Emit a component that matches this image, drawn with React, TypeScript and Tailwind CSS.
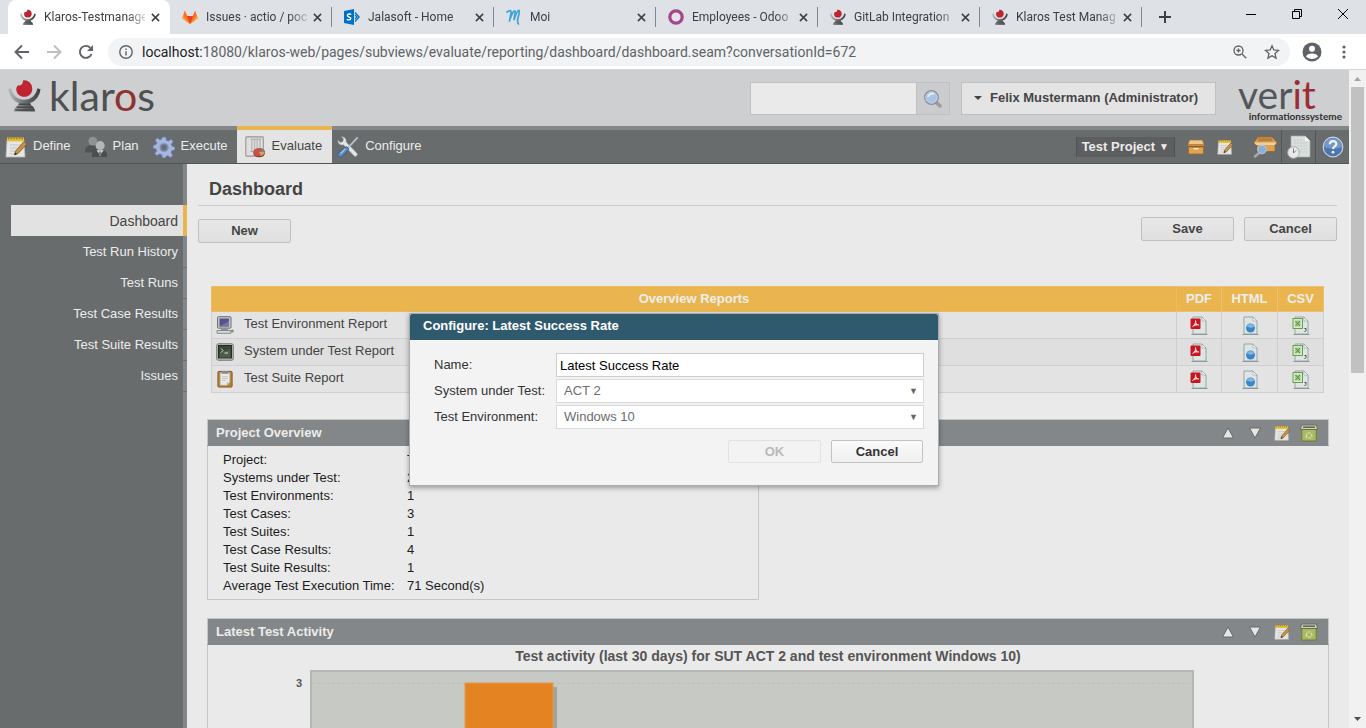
import React from 'react';

interface IconProps {
    className?: string;
}

const KlarosIcon: React.FC<IconProps> = ({ className }) => (
    <svg viewBox="0 0 34 34" className={className} aria-hidden="true">
        <defs>
            <linearGradient id="klarosArm" x1="0" x2="1">
                <stop offset="0" stopColor="#bdbdbd" />
                <stop offset="0.5" stopColor="#6d6f70" />
                <stop offset="1" stopColor="#3d3f40" />
            </linearGradient>
        </defs>
        <path d="M0 10.500l3.300-1C4.500 17 10 21.300 16.700 21.300S29 17 30.300 9.500l3.200 1C32.500 18 28 23 23 24.500c0 3.500 4.500 3.500 5 9H6c.5-5.500 5-5.500 5-9C6 23 1.500 18 0 10.500z" fill="url(#klarosArm)" />
        <path d="M11.500 26h11.500M9 29h17M7.500 32h19.500" stroke="#46494a" strokeWidth="1.500" />
        <path d="M10.500 6.500c2.500.5 5-1 5-5C20.500.5 25 4.500 25 10c0 5-3.500 8.300-8.200 8.300S8.500 15 8.500 10.500c0-1.500 1-3 2-4z" fill="#bf2531" />
    </svg>
);

const GitlabIcon: React.FC<IconProps> = ({ className }) => (
    <svg viewBox="0 0 16 16" className={className} aria-hidden="true">
        <path d="M8 15 0.300 9.200 2.800 1.500 5.300 7h5.400l2.500-5.500 2.500 7.700z" fill="#fc6d26" />
        <path d="M8 15 5 7h6z" fill="#e24329" />
        <path d="M8 15 0.300 9.200 1.200 6.800zM8 15l7.700-5.800-.9-2.400z" fill="#fca326" />
    </svg>
);

const SharepointIcon: React.FC<IconProps> = ({ className }) => (
    <svg viewBox="0 0 16 16" className={className} aria-hidden="true">
        <path d="M0 2 10 0v16L0 14z" fill="#0072c6" />
        <path d="M7.200 5.600C6.300 4.700 3.400 4.700 3.400 6.500c0 2 3.400 1.100 3.400 3 0 1.800-2.800 1.600-3.900.7" fill="none" stroke="#fff" strokeWidth="1.400" />
        <path d="M11 3.500 15.200 8 11 12.500M11 6l2 2-2 2" fill="none" stroke="#0072c6" strokeWidth="1.200" />
    </svg>
);

const MoiIcon: React.FC<IconProps> = ({ className }) => (
    <svg viewBox="0 0 16 16" className={className} aria-hidden="true">
        <path d="M1 3C4 1 5.500 1 5 4L3.500 12M4.500 9C6 4 8 1.500 9 2S8.500 6 8 11c1.500-5 3-9 4.500-9.500S13 5 12 9s-.5 5 .5 6" fill="none" stroke="#3ba3dd" strokeWidth="1.700" strokeLinecap="round" />
    </svg>
);

const OdooIcon: React.FC<IconProps> = ({ className }) => (
    <svg viewBox="0 0 16 16" className={className} aria-hidden="true">
        <circle cx="8" cy="8" r="6.200" fill="#e9e4ea" stroke="#a24689" strokeWidth="3.200" />
    </svg>
);

const CloseIcon: React.FC<IconProps> = ({ className }) => (
    <svg viewBox="0 0 10 10" className={className} aria-hidden="true">
        <path d="M1 1l8 8M9 1 1 9" stroke="#3c4043" strokeWidth="1.700" />
    </svg>
);

const NotepadIcon: React.FC<IconProps> = ({ className }) => (
    <svg viewBox="0 0 22 22" className={className} aria-hidden="true">
        <path d="M2 4h17l1 17H1z" fill="#e6e6e4" stroke="#b9b9b5" strokeWidth="0.800" />
        <path d="M5 9h11M5 12h9M5 15h8M4.500 18h7" stroke="#c3c5c5" />
        <path d="M2 1.500h17v4H2z" fill="#e5c03b" />
        <path d="M3 2.500h15" stroke="#9a7a1c" strokeDasharray="1.500 1.200" strokeWidth="1.500" />
        <path d="M19 5.500 22 8 13 17.500 9.500 19l1-3.800z" fill="#c8924b" stroke="#76511f" strokeWidth="0.800" />
        <path d="M9.500 19l.8-2.500 1.700 1.500z" fill="#222" />
    </svg>
);

const PeopleIcon: React.FC<IconProps> = ({ className }) => (
    <svg viewBox="0 0 24 24" className={className} aria-hidden="true">
        <path d="M0 18c-.3-5 2-7.500 5-8h5c4 .5 5 4 5 8z" fill="#505353" />
        <circle cx="8.500" cy="5.500" r="4.800" fill="#8f9292" />
        <path d="M7.500 23c-.5-4.500 1.500-7 5-7.500h8c3 .5 4 3 3.500 7.500z" fill="#4b4e4e" />
        <path d="M12.500 15.500h8l-4 5z" fill="#dcdcdc" />
        <circle cx="16.500" cy="10.500" r="5" fill="#b5b7b7" />
        <path d="M15.500 17h2l.5 4-1.500 1.500L15 21z" fill="#777a7a" />
    </svg>
);

const GearIcon: React.FC<IconProps> = ({ className }) => (
    <svg viewBox="0 0 24 24" className={className} aria-hidden="true">
        <path d="M10 1h4l.7 3.500 2 .9 3-2 2.400 2.700-2 2.900.8 2 3.100.9v3.500l-3.400.8-.8 2 1.900 3-2.600 2.400-2.900-2-1.900.8L13.500 24h-3.300l-.9-3.400-2-.9-3 1.900-2.400-2.500 2-3-.8-2L0 13.500v-3.400l3.200-.8.9-2L2.200 4.500 4.600 2l3 2 1.800-.7z" fill="#a8b6dc" stroke="#5a76b0" strokeWidth="0.900" />
        <circle cx="12" cy="12.500" r="5" fill="#8495b9" />
        <circle cx="12" cy="12.500" r="3.200" fill="#686c6d" stroke="#6f7f9f" strokeWidth="1.200" />
    </svg>
);

const ReportIcon: React.FC<IconProps> = ({ className }) => (
    <svg viewBox="0 0 22 24" className={className} aria-hidden="true">
        <rect x="1" y="1" width="19" height="21" rx="1" fill="#e3e3e3" stroke="#929292" strokeWidth="1.200" />
        <path d="M3.500 3v17" stroke="#bbb" strokeDasharray="1 2" />
        <path d="M6 3.500h12M6 17h5" stroke="#999" />
        <path d="M7.500 4v13M10.500 4v13M13.500 4v9M16.500 4v9" stroke="#b9bbbb" strokeWidth="1.700" />
        <ellipse cx="15.500" cy="18.500" rx="6.300" ry="4.800" fill="#8e2f25" />
        <ellipse cx="15.500" cy="17.500" rx="6.300" ry="4.500" fill="#c85248" />
        <path d="M15.500 17.500 20 14.500l1.500 3.500z" fill="#5f90a0" />
        <path d="M15.500 17.500h6c-.5 2-2 3.500-4 4z" fill="#d6a84c" />
    </svg>
);

const ToolsIcon: React.FC<IconProps> = ({ className }) => (
    <svg viewBox="0 0 24 24" className={className} aria-hidden="true">
        <path d="M1 4.500 3.500 7 6.500 6l.5-3L4.800.8C8 .5 10.500 3 10 6.500L22 19c1 1.500-1.200 4-3 3L7 9.500C4 10.500.5 8 1 4.500z" fill="#e4e5e5" stroke="#939696" strokeWidth="0.500" />
        <path d="M22.500 1.500 11 14" stroke="#b5c2cd" strokeWidth="2" />
        <path d="M10.500 11.500 13 14 5.500 22.500c-2.500 2-6-1-4.500-3.500z" fill="#5d8abf" stroke="#355d91" />
        <path d="M4 19l5-5" stroke="#a9c6e8" strokeWidth="1.500" />
    </svg>
);

const BoxIcon: React.FC<IconProps> = ({ className }) => (
    <svg viewBox="0 0 18 16" className={className} aria-hidden="true">
        <path d="M2.500 1h13L17 5.500H1z" fill="#ecc590" stroke="#a5702b" strokeWidth="0.700" />
        <path d="M1 5.500h16V8H1z" fill="#c98f42" />
        <path d="M1.500 8h15v7h-15z" fill="#dda253" stroke="#9c6824" strokeWidth="0.700" />
        <path d="M1 7.500h16" stroke="#8c5c20" />
        <path d="M6.500 9h5v1.500h-5z" fill="#fae7c8" />
    </svg>
);

const BoxSearchIcon: React.FC<IconProps> = ({ className }) => (
    <svg viewBox="0 0 24 22" className={className} aria-hidden="true">
        <path d="M5 1h14l5 5.500-2 2v7H4v-7l-3-2z" fill="#dca257" stroke="#966528" strokeWidth="0.800" />
        <path d="M5.500 2h13L20 5.500H4.500z" fill="#b9803a" />
        <path d="M1 6.500h22.500L22 9H3z" fill="#f0ce9c" />
        <path d="M2 20.500 6 17" stroke="#a9aaaa" strokeWidth="2.500" strokeLinecap="round" />
        <circle cx="9" cy="13.500" r="4.300" fill="#86b0e0" stroke="#c3c8cc" strokeWidth="1" />
    </svg>
);

const ScheduleIcon: React.FC<IconProps> = ({ className }) => (
    <svg viewBox="0 0 24 24" className={className} aria-hidden="true">
        <path d="M4 1h14l5 5v16H4z" fill="#d9dfdd" stroke="#a7adab" strokeWidth="0.700" />
        <path d="M18 1v5h5z" fill="#f5f5f5" />
        <path d="M7 5h9M7 8h13M7 11h13M11 14h9M13 17h7" stroke="#c2cbc8" strokeDasharray="2 1" />
        <circle cx="6.500" cy="17.500" r="5.800" fill="#e9e9e9" stroke="#a9abab" />
        <path d="M6.500 13.500V18L9 15.500" fill="none" stroke="#777" />
    </svg>
);

const HelpIcon: React.FC<IconProps> = ({ className }) => (
    <svg viewBox="0 0 22 22" className={className} aria-hidden="true">
        <circle cx="11" cy="11" r="9.800" fill="#4976b0" stroke="#c9d2dd" strokeWidth="1.200" />
        <path d="M2 11a9 9 0 0 1 18 0c-5 2-12 2-18 0z" fill="#7398c8" />
        <path d="M7.800 8.200C8 4 14.500 4.200 14.300 8c-.1 2.500-3.200 2.500-3.200 5" fill="none" stroke="#f4f4f4" strokeWidth="2.200" />
        <circle cx="11" cy="16.200" r="1.400" fill="#f4f4f4" />
    </svg>
);

const MagnifierIcon: React.FC<IconProps> = ({ className }) => (
    <svg viewBox="0 0 20 20" className={className} aria-hidden="true">
        <path d="M13 13l4 4" stroke="#9b9d9f" strokeWidth="3.500" strokeLinecap="round" />
        <circle cx="8.500" cy="8.500" r="6.800" fill="#a9c4e4" stroke="#8b8e92" strokeWidth="1.300" />
        <circle cx="8.500" cy="8.500" r="5.600" fill="none" stroke="#c5d2e2" strokeWidth="1" />
        <path d="M5 8c1-3 3-4 6-3" stroke="#e7f0fa" strokeWidth="1.500" fill="none" />
    </svg>
);

const ComputerIcon: React.FC<IconProps> = ({ className }) => (
    <svg viewBox="0 0 18 18" className={className} aria-hidden="true">
        <rect x="1.500" y="0.700" width="13.500" height="11.500" rx="1" fill="#c4c5c6" stroke="#6f7172" />
        <rect x="3.500" y="2.500" width="9.500" height="8" fill="#55548d" />
        <path d="M3.500 10.500 13 5v5.500z" fill="#7776a6" />
        <path d="M5 12.500h7v2H5z" fill="#8d8f90" />
        <path d="M1 14.500h14v2.800H1z" fill="#d9d9d9" stroke="#747677" strokeWidth="0.800" />
        <circle cx="16.300" cy="15" r="1.500" fill="#88898a" />
    </svg>
);

const TerminalIcon: React.FC<IconProps> = ({ className }) => (
    <svg viewBox="0 0 18 18" className={className} aria-hidden="true">
        <rect x="0.800" y="0.800" width="16.400" height="16.400" rx="1.500" fill="#c5c7c4" stroke="#6c6e6b" />
        <rect x="2.500" y="2.500" width="13" height="12.500" fill="#384736" stroke="#232b22" />
        <path d="M3.500 9.500 14.500 6v8.500h-11z" fill="#4d5f49" />
        <path d="M5 5.500 7 7.500 5 9.500M8.500 10h3.500" fill="none" stroke="#dbe2d8" />
    </svg>
);

const ClipboardIcon: React.FC<IconProps> = ({ className }) => (
    <svg viewBox="0 0 18 19" className={className} aria-hidden="true">
        <rect x="1.500" y="1.500" width="15" height="16.500" rx="1" fill="#ba8437" stroke="#7c5725" />
        <path d="M4 3h10v10l-3 3H4z" fill="#e9e9e9" stroke="#b4b4b4" strokeWidth="0.600" />
        <path d="M11 16v-3h3z" fill="#bcbcbc" />
        <path d="M6 7h6M6 9h6M6 11h4" stroke="#c4c4c4" />
        <path d="M5.500 1h7v3h-7z" fill="#8a8b8a" />
    </svg>
);

const DocumentPage = () => (
    <>
        <path d="M3 1h9l4 4v13H3z" fill="#dfe5e5" stroke="#8ba09f" strokeWidth="0.900" />
        <path d="M12 1v4h4z" fill="#fafafa" stroke="#8ba09f" strokeWidth="0.600" />
        <path d="M1.500 18.500h16" stroke="#8e9a99" />
    </>
);

const PdfIcon: React.FC<IconProps> = ({ className }) => (
    <svg viewBox="0 0 18 19" className={className} aria-hidden="true">
        <DocumentPage />
        <rect x="0.500" y="2.500" width="10" height="10.500" rx="1" fill="#c9151e" />
        <path d="M2.500 10.500C4.500 9 6 6.500 5.500 4.500c.5 3 1.500 4.500 3.500 4.500-2-.2-4.500.2-6.500 1.500z" fill="#f3c9cb" stroke="#fff" strokeWidth="0.600" />
    </svg>
);

const HtmlIcon: React.FC<IconProps> = ({ className }) => (
    <svg viewBox="0 0 18 19" className={className} aria-hidden="true">
        <DocumentPage />
        <circle cx="9.500" cy="12" r="4.500" fill="#3d86c6" />
        <path d="M5.500 10.500a4.500 4.500 0 0 1 8 0c-2 1.500-5 1.500-8 0z" fill="#82b6e2" />
    </svg>
);

const CsvIcon: React.FC<IconProps> = ({ className }) => (
    <svg viewBox="0 0 18 19" className={className} aria-hidden="true">
        <DocumentPage />
        <rect x="1" y="2.500" width="9.500" height="10" fill="#d8e8cc" stroke="#68a04c" />
        <path d="M3 4.500h5.500v6H3z" fill="#a5cc92" />
        <path d="M3.500 5 8 10M8 5l-4.500 5" stroke="#4c8b34" />
        <path d="M12.500 12.500H14v2L12.500 16" fill="none" stroke="#444" />
    </svg>
);

const TrashIcon: React.FC<IconProps> = ({ className }) => (
    <svg viewBox="0 0 18 18" className={className} aria-hidden="true">
        <path d="M1.800 5h14.400v12H1.800z" fill="#a9b964" stroke="#6f7d35" />
        <path d="M1.500 1h15l1 4.500H.5z" fill="#cdd0c8" stroke="#687044" />
        <path d="M3 3.200h12" stroke="#5d6058" strokeWidth="1.500" />
        <path d="M6 12.500 7.500 9h3l1.500 3-1.500 2h-3z" fill="none" stroke="#dbe3b0" strokeWidth="1.200" strokeDasharray="3 1" />
    </svg>
);

const MoveIcon: React.FC<IconProps & { down?: boolean }> = ({ className, down }) => (
    <svg viewBox="0 0 12 12" className={className} aria-hidden="true">
        <path d={down ? 'M0.500 1h11L6 11z' : 'M0.500 11h11L6 1z'} fill="#e4e5e5" stroke="#66696a" />
    </svg>
);

const tabs = [
    { title: 'Klaros-Testmanage', icon: KlarosIcon, active: true },
    { title: 'Issues · actio / poc', icon: GitlabIcon },
    { title: 'Jalasoft - Home', icon: SharepointIcon },
    { title: 'Moi', icon: MoiIcon },
    { title: 'Employees - Odoo', icon: OdooIcon },
    { title: 'GitLab Integration', icon: KlarosIcon },
    { title: 'Klaros Test Manag', icon: KlarosIcon },
];

const navItems = [
    { label: 'Define', icon: NotepadIcon },
    { label: 'Plan', icon: PeopleIcon },
    { label: 'Execute', icon: GearIcon },
    { label: 'Evaluate', icon: ReportIcon, active: true },
    { label: 'Configure', icon: ToolsIcon },
];

const sideItems = ['Dashboard', 'Test Run History', 'Test Runs', 'Test Case Results', 'Test Suite Results', 'Issues'];

const reports = [
    { label: 'Test Environment Report', icon: ComputerIcon },
    { label: 'System under Test Report', icon: TerminalIcon },
    { label: 'Test Suite Report', icon: ClipboardIcon },
];

const overview = [
    ['Project:', 'Test Project'],
    ['Systems under Test:', '2'],
    ['Test Environments:', '1'],
    ['Test Cases:', '3'],
    ['Test Suites:', '1'],
    ['Test Case Results:', '4'],
    ['Test Suite Results:', '1'],
    ['Average Test Execution Time:', '71 Second(s)'],
];

const BrowserTabs = () => (
    <div className="flex h-[34px] shrink-0 bg-[#dee1e6] pl-2 text-xs text-[#3c4043]">
        {tabs.map((tab, i) => (
            <div
                key={tab.title}
                className={`flex w-[162px] items-center ${tab.active ? 'rounded-t-lg bg-white' : ''}`}
            >
                <tab.icon className="ml-3 size-4 shrink-0" />
                <span className="ml-2 w-[101px] overflow-hidden whitespace-nowrap [mask-image:linear-gradient(to_right,#000_82%,transparent_105%)]">
                    {tab.title}
                </span>
                <button aria-label={`Close ${tab.title}`} className="ml-[6px]">
                    <CloseIcon className="size-[9px]" />
                </button>
                {i > 0 && <span className="ml-auto h-5 w-px bg-[#80868b]" />}
            </div>
        ))}
        <button aria-label="New tab" className="ml-[17px]">
            <svg viewBox="0 0 12 12" className="size-3">
                <path d="M6 0v12M0 6h12" stroke="#3c4043" strokeWidth="2" />
            </svg>
        </button>
        <div className="ml-auto flex h-7 items-center gap-9 pr-[18px]">
            <button aria-label="Minimize">
                <svg viewBox="0 0 10 10" className="size-[10px]"><path d="M0 5.500h10" stroke="#000" /></svg>
            </button>
            <button aria-label="Restore">
                <svg viewBox="0 0 10 10" className="size-[10px]">
                    <path d="M.5 2.500h7v7h-7zM2.500 2.500v-2h7v7h-2" fill="none" stroke="#000" />
                </svg>
            </button>
            <button aria-label="Close window">
                <svg viewBox="0 0 10 10" className="size-[10px]"><path d="M0 0l10 10M10 0 0 10" stroke="#000" /></svg>
            </button>
        </div>
    </div>
);

const AddressBar = () => (
    <div className="flex h-9 shrink-0 items-center border-b border-[#d5d7da] bg-white pr-5 pl-[14px]">
        <button aria-label="Back">
            <svg viewBox="0 0 16 16" className="size-4">
                <path d="M15 8H2M8 1.500 1.500 8 8 14.500" fill="none" stroke="#5f6368" strokeWidth="1.900" />
            </svg>
        </button>
        <button aria-label="Forward" className="ml-4">
            <svg viewBox="0 0 16 16" className="size-4">
                <path d="M1 8h13M8 1.500 14.500 8 8 14.500" fill="none" stroke="#bcbec1" strokeWidth="1.900" />
            </svg>
        </button>
        <button aria-label="Reload" className="ml-4">
            <svg viewBox="0 0 16 16" className="size-4">
                <path d="M13.500 10A6 6 0 1 1 12.300 3.800" fill="none" stroke="#5f6368" strokeWidth="1.900" />
                <path d="M15 1v6H9z" fill="#5f6368" />
            </svg>
        </button>
        <div className="ml-[14px] flex h-7 flex-1 items-center rounded-full bg-[#f1f3f4] pr-[10px] pl-[11px]">
            <svg viewBox="0 0 14 14" className="size-[14px] shrink-0">
                <circle cx="7" cy="7" r="6.200" fill="none" stroke="#5f6368" strokeWidth="1.400" />
                <path d="M7 6.200v4.300M7 3.500v1.500" stroke="#5f6368" strokeWidth="1.400" />
            </svg>
            <span className="ml-[9px] flex-1 text-sm whitespace-nowrap text-[#5f6368]">
                <span className="text-[#202124]">localhost:</span>
                18080/klaros-web/pages/subviews/evaluate/reporting/dashboard/dashboard.seam?conversationId=672
            </span>
            <svg viewBox="0 0 14 14" className="size-[14px]">
                <circle cx="5.500" cy="5.500" r="4.500" fill="none" stroke="#5f6368" strokeWidth="1.300" />
                <path d="M9 9l4.300 4.300M3.500 5.500h4M5.500 3.500v4" stroke="#5f6368" strokeWidth="1.300" />
            </svg>
            <svg viewBox="0 0 16 16" className="ml-[17px] size-4">
                <path d="M8 1.800 9.800 6l4.700.4L11 9.500l1 4.600-4-2.400-4 2.400 1-4.600L1.500 6.400 6.200 6z" fill="none" stroke="#5f6368" strokeWidth="1.300" />
            </svg>
        </div>
        <svg viewBox="0 0 20 20" className="ml-3 size-5">
            <circle cx="10" cy="10" r="9.500" fill="#5f6368" />
            <circle cx="10" cy="6.700" r="3" fill="#fff" />
            <path d="M4 14.500c1-4 11-4 12 0-2.500 3.200-9.500 3.200-12 0z" fill="#fff" />
        </svg>
        <svg viewBox="0 0 4 14" className="ml-5 h-[14px] w-1">
            <circle cx="2" cy="2" r="1.600" fill="#5f6368" />
            <circle cx="2" cy="7" r="1.600" fill="#5f6368" />
            <circle cx="2" cy="12" r="1.600" fill="#5f6368" />
        </svg>
    </div>
);

const Header = () => (
    <header className="flex h-14 items-start bg-[#cecfd1]">
        <div className="flex items-start pt-[9px] pl-2">
            <KlarosIcon className="size-[33px]" />
            <span className="ml-2 font-[Lato] text-[41px] leading-[34px] text-[#4e5052]">
                klar<span className="text-[#8f3331]">o</span>s
            </span>
        </div>
        <form className="mt-3 ml-auto flex h-[33px] border border-[#bfc0c2]">
            <input aria-label="Search" className="w-[166px] border-r border-[#bfc0c2] bg-[#eaeaea] px-2" />
            <button type="button" aria-label="Search" className="flex w-8 items-center justify-center bg-[#cbccce]">
                <MagnifierIcon className="size-5" />
            </button>
        </form>
        <button className="mt-3 ml-[11px] flex h-[33px] w-[255px] items-center border border-[#bfc0c2] bg-[#e4e4e4] pb-[2px] pl-3 font-bold text-[#454545]">
            <svg viewBox="0 0 8 4" className="mr-2 h-1 w-2"><path d="M0 0h8L4 4z" fill="#444" /></svg>
            Felix Mustermann (Administrator)
        </button>
        <div className="mr-[7px] ml-[22px] flex w-[104px] flex-col pt-2">
            <span className="h-8 font-[Lato] text-[39px] leading-8 text-[#54565a]">
                ver<span className="text-[#9a2e36]">it</span>
            </span>
            <span className="self-end font-[Lato] text-[10px] leading-3 font-bold text-[#303030]">informationssysteme</span>
        </div>
    </header>
);

const MainNav = () => (
    <nav className="flex h-[38px] border-b border-[#505354] bg-[#686c6d]">
        {navItems.map((item) => (
            <a
                key={item.label}
                href="#"
                className={
                    item.active
                        ? 'flex items-center gap-[6px] border-t-4 border-[#eab54e] bg-[#e4e4e4] pr-[10px] pl-[7px] text-[#444]'
                        : 'flex items-center gap-[6px] border-t-4 border-[#83878a] pr-[9px] pl-[5px] text-[#ececec]'
                }
            >
                <item.icon className="size-[22px]" />
                <span className="pb-[2px]">{item.label}</span>
            </a>
        ))}
        <div className="flex flex-1 items-center justify-end border-t-4 border-[#83878a]">
            <button className="flex h-5 items-center border-x border-[#4f5152] bg-[#5c5e5f] px-[5px] font-bold text-[#ececec]">
                Test Project
                <span className="ml-1 text-[10px]">▼</span>
            </button>
            <button aria-label="Select project" className="ml-3"><BoxIcon className="h-4 w-[18px]" /></button>
            <button aria-label="Edit project" className="ml-3"><NotepadIcon className="size-4" /></button>
            <button aria-label="Browse artifacts" className="mr-1 ml-5"><BoxSearchIcon className="h-[22px] w-6" /></button>
            <button aria-label="Scheduled reports" className="flex h-full w-[34px] items-center justify-center border-l border-[#525556]">
                <ScheduleIcon className="size-6" />
            </button>
            <button aria-label="Help" className="flex h-full w-[34px] items-center justify-center border-l border-[#525556]">
                <HelpIcon className="size-[22px]" />
            </button>
        </div>
    </nav>
);

const Sidebar = () => (
    <aside className="w-[187px] shrink-0 border-r-4 border-[#83878a] bg-[#686c6d] pt-[41px]">
        {sideItems.map((label, i) => (
            <a
                key={label}
                href="#"
                className={
                    i === 0
                        ? '-mr-1 mb-px ml-[11px] flex h-[31px] items-center justify-end border-r-4 border-[#eab54e] bg-[#e2e2e2] pr-[5px] text-sm text-[#444]'
                        : '-mr-1 flex h-[31px] items-center justify-end border-b border-[#696d6e] pr-[9px] text-[#ececec]'
                }
            >
                {label}
            </a>
        ))}
    </aside>
);

const PageButton: React.FC<{ children: React.ReactNode }> = ({ children }) => (
    <button className="h-6 w-[93px] rounded-xs border border-[#bfbfbf] bg-linear-to-b from-[#e8e8e8] to-[#dfdfdf] font-bold text-[#454545]">
        {children}
    </button>
);

const ReportsTable = () => (
    <table className="mr-[25px] ml-6 w-[calc(100%-49px)] table-fixed border-collapse text-[#444]">
        <thead>
            <tr className="h-[25px] bg-[#eab54e] text-[#eeeeee]">
                <th className="border border-[#e9bd63] p-0">Overview Reports</th>
                <th className="w-[45px] border border-[#e9c278] p-0">PDF</th>
                <th className="w-14 border border-[#e9c278] p-0">HTML</th>
                <th className="w-[46px] border border-[#e9c278] p-0">CSV</th>
            </tr>
        </thead>
        <tbody>
            {reports.map((report) => (
                <tr key={report.label} className="h-[27px] bg-[#e3e3e3] even:bg-[#dfdfdf]">
                    <td className="border border-[#cfcfcf] p-0">
                        <a href="#" className="flex items-center gap-[10px] pl-1">
                            <report.icon className="size-[18px]" />
                            <span className="pb-[2px]">{report.label}</span>
                        </a>
                    </td>
                    {[PdfIcon, HtmlIcon, CsvIcon].map((Icon, i) => (
                        <td key={i} className="border border-[#cfcfcf] p-0">
                            <button aria-label={`Export ${report.label}`} className="mx-auto block">
                                <Icon className="h-[19px] w-[18px]" />
                            </button>
                        </td>
                    ))}
                </tr>
            ))}
        </tbody>
    </table>
);

const PanelHeader: React.FC<{ title: string }> = ({ title }) => (
    <div className="flex h-[27px] items-center border border-[#c4c6c4] border-b-[#83878a] bg-[#83878a] pr-[10px] pl-2">
        <h2 className="flex-1 font-bold text-[#ececec]">{title}</h2>
        <button aria-label="Move up"><MoveIcon className="size-3" /></button>
        <button aria-label="Move down" className="ml-[15px]"><MoveIcon down className="size-3" /></button>
        <button aria-label="Configure" className="ml-[13px]"><NotepadIcon className="size-4" /></button>
        <button aria-label="Delete" className="ml-[10px]"><TrashIcon className="size-[18px]" /></button>
    </div>
);

const ActivityChart = () => (
    <svg viewBox="0 0 884 220" className="mt-[5px] h-[220px] w-[884px]" role="img" aria-label="Test activity">
        <rect x="1" y="1" width="882" height="218" fill="#c7c9c4" stroke="#b4b7b3" strokeWidth="2" />
        <path d="M2 13.500h880" stroke="#bdc0bc" strokeDasharray="3 2" />
        <rect x="158" y="17" width="89" height="202" fill="#a1a49f" />
        <rect x="155" y="13" width="88" height="206" fill="#e48321" stroke="#e39a50" />
    </svg>
);

const ConfigureDialog = () => (
    <div className="absolute inset-x-0 top-[243px] flex justify-center pr-px">
        <div
            role="dialog"
            aria-labelledby="dialog-title"
            className="h-[173px] w-[530px] border border-[#a9abac] bg-[#f3f3f3] text-[#333] shadow-[0_2px_5px_rgba(0,0,0,0.35)]"
        >
            <h2 id="dialog-title" className="flex h-[26px] items-center rounded-t-xs bg-[#2f5a6e] pb-[2px] pl-[13px] font-bold text-white">
                Configure: Latest Success Rate
            </h2>
            <form className="pt-[13px] pr-[14px] pl-6">
                <div className="grid grid-cols-[122px_1fr] items-center gap-y-[2px]">
                    <label htmlFor="name">Name:</label>
                    <input id="name" defaultValue="Latest Success Rate" className="h-6 border border-[#cdcdcd] bg-white px-[3px] text-black" />
                    <label htmlFor="sut">System under Test:</label>
                    <div className="relative">
                        <select id="sut" className="block h-6 w-full appearance-none border border-[#dadada] bg-white px-[7px] text-[#6c6c6c]">
                            <option>ACT 2</option>
                        </select>
                        <span className="pointer-events-none absolute top-1 right-[6px] text-[9px] leading-4 text-[#666]">▼</span>
                    </div>
                    <label htmlFor="environment">Test Environment:</label>
                    <div className="relative">
                        <select id="environment" className="block h-6 w-full appearance-none border border-[#dadada] bg-white px-[7px] text-[#6c6c6c]">
                            <option>Windows 10</option>
                        </select>
                        <span className="pointer-events-none absolute top-1 right-[6px] text-[9px] leading-4 text-[#666]">▼</span>
                    </div>
                </div>
                <div className="mt-[11px] mr-px flex justify-end gap-[10px]">
                    <button type="button" disabled className="h-[23px] w-[93px] rounded-xs border border-[#e2e2e2] font-bold text-[#b9b9b9]">OK</button>
                    <button type="button" className="h-[23px] w-[92px] rounded-xs border border-[#c2c2c2] bg-linear-to-b from-[#fbfbfb] to-[#efefef] font-bold text-[#333]">Cancel</button>
                </div>
            </form>
        </div>
    </div>
);

const Scrollbar = () => (
    <div className="flex w-[17px] shrink-0 flex-col items-center justify-between bg-[#f1f1f1]">
        <div className="flex flex-col items-center">
            <svg viewBox="0 0 17 17" className="size-[17px]"><path d="M5 11h7L8.500 7z" fill="#a3a3a3" /></svg>
            <div className="h-[286px] w-[13px] bg-[#c1c1c1]" />
        </div>
        <svg viewBox="0 0 17 17" className="size-[17px]"><path d="M5 6h7l-3.500 4z" fill="#505050" /></svg>
    </div>
);

export default function App() {
    return (
        <div className="flex h-screen flex-col overflow-hidden font-[Roboto,sans-serif]">
            <BrowserTabs />
            <AddressBar />
            <div className="flex min-h-0 flex-1">
                <div className="relative flex min-w-0 flex-1 flex-col overflow-hidden font-['Liberation_Sans',Arial,sans-serif] text-[13px] leading-[18px]">
                    <Header />
                    <MainNav />
                    <div className="flex min-h-0 flex-1 bg-[#eaeaea]">
                        <Sidebar />
                        <main className="min-w-0 flex-1">
                            <h1 className="mr-3 ml-[11px] border-b border-[#cbcbcb] pt-[13px] pb-1 pl-[11px] text-lg leading-6 font-bold text-[#444]">
                                Dashboard
                            </h1>
                            <div className="mt-[11px] mr-3 ml-[11px] flex h-[26px] justify-between">
                                <div className="flex items-end">
                                    <PageButton>New</PageButton>
                                </div>
                                <div className="flex items-start gap-[10px]">
                                    <PageButton>Save</PageButton>
                                    <PageButton>Cancel</PageButton>
                                </div>
                            </div>
                            <div className="mt-[43px]">
                                <ReportsTable />
                            </div>
                            <section className="mt-[26px] mr-5 ml-5">
                                <PanelHeader title="Project Overview" />
                                <div className="w-[552px] border border-t-0 border-[#c6c6c6] pt-[5px] pb-1 pl-[15px] text-[#1c1c1c]">
                                    <table>
                                        <tbody>
                                            {overview.map(([label, value]) => (
                                                <tr key={label}>
                                                    <th className="w-[184px] p-0 text-left font-normal whitespace-nowrap">{label}</th>
                                                    <td className="p-0 whitespace-nowrap">{value}</td>
                                                </tr>
                                            ))}
                                        </tbody>
                                    </table>
                                </div>
                            </section>
                            <section className="mt-[18px] mr-5 ml-5">
                                <PanelHeader title="Latest Test Activity" />
                                <div className="border border-t-0 border-[#c6c6c6]">
                                    <h3 className="pt-[2px] text-center text-sm leading-[18px] font-bold text-[#555]">
                                        Test activity (last 30 days) for SUT ACT 2 and test environment Windows 10)
                                    </h3>
                                    <div className="flex pl-[88px]">
                                        <span className="w-[14px] shrink-0 pt-[9px] text-[11px] font-bold text-[#555]">3</span>
                                        <ActivityChart />
                                    </div>
                                </div>
                            </section>
                        </main>
                    </div>
                    <ConfigureDialog />
                </div>
                <Scrollbar />
            </div>
        </div>
    );
}
